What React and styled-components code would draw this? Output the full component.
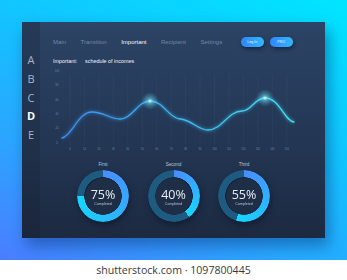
import React from 'react'
import styled, { createGlobalStyle } from 'styled-components'

const GlobalStyle = createGlobalStyle`
    html, body {
        margin: 0;
        padding: 0;
        background: #ffffff;
    }
    body {
        font-family: "Liberation Sans", Arial, sans-serif;
    }
`

const Page = styled.div`
    width: 347px;
    height: 280px;
    display: flex;
    flex-direction: column;
    overflow: hidden;
`

const Stage = styled.div`
    height: 260px;
    box-sizing: border-box;
    padding: 22px;
    background: linear-gradient(205deg, #00e6ff 0%, #12c4ff 40%, #2aa6ff 70%, #4a7dff 100%);
    display: flex;
`

const Panel = styled.div`
    flex: 1;
    display: flex;
    background: linear-gradient(180deg, #2c4465 0%, #243856 50%, #1c2a41 100%);
    box-shadow: 4px 8px 14px rgba(10, 40, 110, 0.45);
`

const Sidebar = styled.div`
    width: 18px;
    background: linear-gradient(180deg, #263a58 0%, #1f3049 60%, #1a263b 100%);
    display: flex;
    flex-direction: column;
    align-items: center;
    padding-top: 29px;
`

const Letter = styled.div`
    font-family: "Open Sans", sans-serif;
    font-size: 11px;
    line-height: 18.8px;
    font-weight: ${({ active }) => (active ? 700 : 400)};
    color: ${({ active }) => (active ? '#ffffff' : '#a6b4c8')};
`

const Main = styled.div`
    flex: 1;
    display: flex;
    flex-direction: column;
    padding-left: 13px;
`

const Nav = styled.div`
    display: flex;
    align-items: center;
    height: 12px;
    margin-top: 14px;
`

const NavItem = styled.span`
    font-size: 6px;
    margin-right: 14.5px;
    color: ${({ active }) => (active ? '#f2f6fb' : '#7088a6')};
`

const Buttons = styled.div`
    display: flex;
    gap: 6px;
    margin-left: 4px;
`

const Pill = styled.div`
    width: 23px;
    height: 9.5px;
    border-radius: 5px;
    background: linear-gradient(90deg, #2f86ff 0%, #34b6ff 100%);
    box-shadow: 1px 2px 4px rgba(5, 15, 40, 0.55);
    color: #e8f4ff;
    font-size: 3.6px;
    display: flex;
    align-items: center;
    justify-content: center;
`

const Heading = styled.div`
    display: flex;
    align-items: center;
    height: 10px;
    margin-top: 8px;
    font-size: 5.4px;
    color: #eef3fa;
`

const HeadLabel = styled.span`
    width: 32px;
`

const ChartWrap = styled.div`
    margin-left: -13px;
    height: 86px;
`

const Donuts = styled.div`
    display: grid;
    grid-template-columns: repeat(3, 52px);
    column-gap: 18.5px;
    padding-left: 24px;
    padding-top: 10px;
`

const DonutCell = styled.div`
    display: flex;
    flex-direction: column;
    align-items: center;
`

const DonutTitle = styled.div`
    font-size: 4.6px;
    color: #b8c6d8;
    height: 8px;
    line-height: 6px;
`

const Ring = styled.div`
    position: relative;
    width: 52px;
    height: 52px;
    filter: drop-shadow(1px 3px 3px rgba(5, 12, 30, 0.5));
`

const RingBand = styled.div`
    position: absolute;
    inset: 0;
    border-radius: 50%;
    background: conic-gradient(
        #4a8bff 0%,
        #14d8ff ${({ value }) => value}%,
        #1d5b80 ${({ value }) => value}%,
        #1d5b80 100%
    );
    -webkit-mask: radial-gradient(farthest-side, transparent calc(100% - 7.5px), #000 calc(100% - 7px));
    mask: radial-gradient(farthest-side, transparent calc(100% - 7.5px), #000 calc(100% - 7px));
`

const RingHole = styled.div`
    position: absolute;
    inset: 7.5px;
    border-radius: 50%;
    background: #1f2e47;
`

const RingText = styled.div`
    position: absolute;
    inset: 0;
    display: flex;
    flex-direction: column;
    align-items: center;
    justify-content: center;
    padding-top: 1px;
`

const Percent = styled.div`
    font-family: "Open Sans", sans-serif;
    font-size: 12.5px;
    line-height: 13px;
    color: #e6edf5;
`

const Completed = styled.div`
    font-size: 3.6px;
    color: #b5c3d5;
    margin-top: 1px;
`

const Footer = styled.div`
    height: 20px;
    background: #ffffff;
    display: flex;
    align-items: center;
    justify-content: center;
    font-family: "Open Sans", sans-serif;
    font-size: 10.6px;
    color: #3a3a3a;
`

const xLabels = Array.from({ length: 16 }, (_, i) => i * 10)
const yLabels = [100, 80, 60, 40, 20, 0]

const curve =
    'M22,72 C32,70 38,46 52,46 C64,46 70,53 80,53 C92,53 98,35 110,35 C124,35 128,52 140,53 C152,54 158,64 168,64 C182,64 188,45 202,45 C212,45 214,32 225,32 C240,32 244,55 254,56'

const Chart = () => (
    <svg width="285" height="86" viewBox="0 0 285 86">
        <defs>
            <linearGradient id="line" x1="0" x2="1" y1="0" y2="0">
                <stop offset="0" stopColor="#3b8df5" />
                <stop offset="0.5" stopColor="#3ab8f2" />
                <stop offset="1" stopColor="#3de0f0" />
            </linearGradient>
            <radialGradient id="glow">
                <stop offset="0" stopColor="#e8ffff" stopOpacity="0.95" />
                <stop offset="0.3" stopColor="#7ff0ff" stopOpacity="0.45" />
                <stop offset="1" stopColor="#40d0ff" stopOpacity="0" />
            </radialGradient>
            <filter id="blur">
                <feGaussianBlur stdDeviation="1.4" />
            </filter>
        </defs>
        {xLabels.map((v, i) => (
            <line key={v} x1={30 + i * 14.45} x2={30 + i * 14.45} y1="9" y2="79" stroke="#ffffff" strokeOpacity="0.06" strokeWidth="0.6" />
        ))}
        {yLabels.map((v, i) => (
            <text key={v} x="17" y={6 + i * 14.3} fontSize="2.6" fill="#6f86a3" textAnchor="middle" fontFamily="Liberation Sans, sans-serif">{v}</text>
        ))}
        {xLabels.map((v, i) => (
            <text key={v} x={30 + i * 14.45} y="84" fontSize="2.6" fill="#6f86a3" textAnchor="middle" fontFamily="Liberation Sans, sans-serif">{v}</text>
        ))}
        <path d={curve} fill="none" stroke="url(#line)" strokeWidth="3" strokeOpacity="0.4" filter="url(#blur)" />
        <path d={curve} fill="none" stroke="url(#line)" strokeWidth="1.3" strokeLinecap="round" />
        <circle cx="110" cy="35" r="9" fill="url(#glow)" />
        <circle cx="225" cy="32" r="9" fill="url(#glow)" />
    </svg>
)

const donuts = [
    { title: 'First', value: 75 },
    { title: 'Second', value: 40 },
    { title: 'Third', value: 55 },
]

const App = () => {
    return (
        <Page>
            <GlobalStyle />
            <Stage>
                <Panel>
                    <Sidebar>
                        {['A', 'B', 'C', 'D', 'E'].map((l) => (
                            <Letter key={l} active={l === 'D'}>{l}</Letter>
                        ))}
                    </Sidebar>
                    <Main>
                        <Nav>
                            <NavItem>Main</NavItem>
                            <NavItem>Transition</NavItem>
                            <NavItem active>Important</NavItem>
                            <NavItem>Recipient</NavItem>
                            <NavItem>Settings</NavItem>
                            <Buttons>
                                <Pill>Log In</Pill>
                                <Pill>PRO</Pill>
                            </Buttons>
                        </Nav>
                        <Heading>
                            <HeadLabel>Important:</HeadLabel>
                            <span>schedule of incomes</span>
                        </Heading>
                        <ChartWrap>
                            <Chart />
                        </ChartWrap>
                        <Donuts>
                            {donuts.map((d) => (
                                <DonutCell key={d.title}>
                                    <DonutTitle>{d.title}</DonutTitle>
                                    <Ring>
                                        <RingHole />
                                        <RingBand value={d.value} />
                                        <RingText>
                                            <Percent>{d.value}%</Percent>
                                            <Completed>Completed</Completed>
                                        </RingText>
                                    </Ring>
                                </DonutCell>
                            ))}
                        </Donuts>
                    </Main>
                </Panel>
            </Stage>
            <Footer>shutterstock.com · 1097800445</Footer>
        </Page>
    )
}

export default App
